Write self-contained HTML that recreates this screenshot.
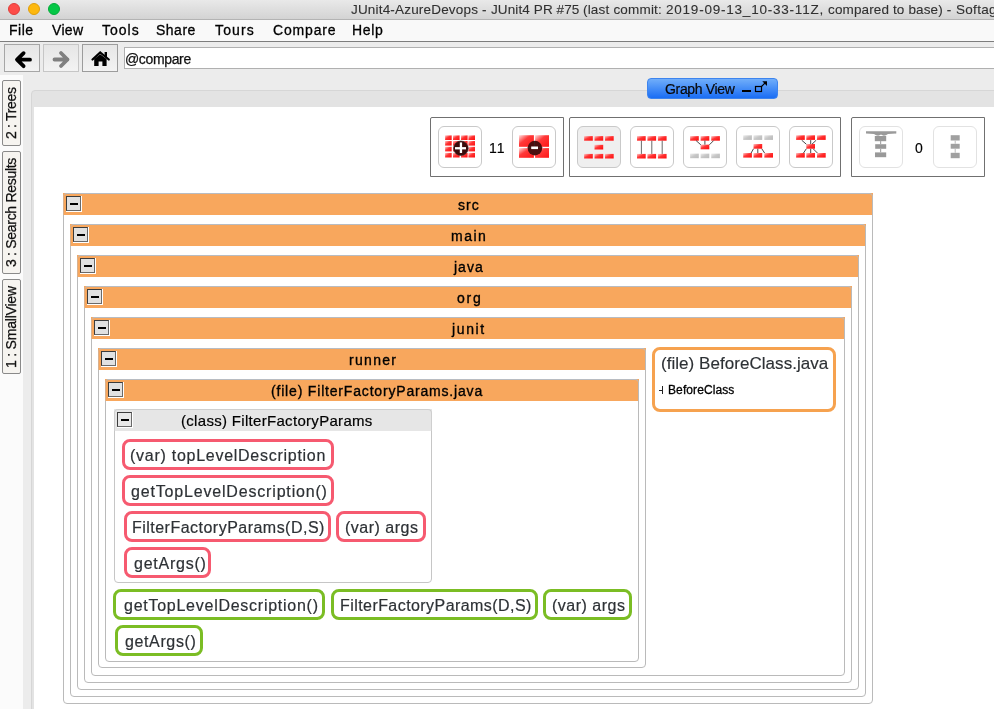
<!DOCTYPE html>
<html><head><meta charset="utf-8">
<style>
*{margin:0;padding:0;box-sizing:border-box}
html,body{width:994px;height:709px;overflow:hidden;background:#ececec;font-family:"Liberation Sans",sans-serif;position:relative}
.a{position:absolute}
.t{position:absolute;white-space:nowrap;line-height:1;will-change:transform}
#tb{left:0;top:0;width:994px;height:20px;background:linear-gradient(#e9e9e9,#d3d3d3);border-bottom:1px solid #b3b3b3}
.tl{position:absolute;top:3px;width:12px;height:12px;border-radius:50%}
#mb{left:0;top:20px;width:994px;height:22px;background:#f9f9f9;border-bottom:1px solid #7d7d7d}
.nb{position:absolute;top:44px;width:36px;height:28px;border:1px solid #a6a6a6;background:linear-gradient(#e6e6e6,#f3f3f3)}
#tf{left:124px;top:47px;width:880px;height:22px;background:#fff;border:1px solid #b0b0b0}
#sb{left:0;top:75px;width:23px;height:634px;background:#fbfbfb}
.vt{position:absolute;left:2px;width:19px;background:#f6f4f0;border:1px solid #8a8a8a;border-radius:2px}
.vtt{position:absolute;will-change:transform;line-height:1;white-space:nowrap;transform-origin:0 0;transform:rotate(-90deg)}
#pn{left:31px;top:90px;width:980px;height:640px;border:1px solid #d6d6d6;border-radius:4px 0 0 0;background:#e3e3e3}
#pw{left:34px;top:107px;width:970px;height:610px;background:#fff}
#gv{left:647px;top:78px;width:131px;height:21px;border-radius:4px;background:linear-gradient(#70aefa,#1a6df4);border:1px solid #3d84ee}
.grp{position:absolute;top:117px;height:60px;border:1px solid #707070;border-radius:2px 0 0 0;background:#fff}
.btn{position:absolute;top:126px;width:44px;height:42px;border:1px solid #c9c9c9;border-radius:6px;background:#fff}
.bx{position:absolute;border:1px solid #bababa;border-radius:4px;background:#fff}
.hd{position:absolute;left:-1px;top:-1px;right:-1px;height:22px;background:#f8a75d}
.hdb{position:absolute;left:-1px;top:-1px;right:-1px;height:22px;border:1px solid #b8bcc2;border-left-color:rgba(184,188,194,0.5);border-right-color:#bababa;border-bottom:0;border-radius:4px 4px 0 0}
.cb{position:absolute;width:16px;height:16px;background:#fff}
.cbi{position:absolute;left:0;top:0;width:15px;height:15px;background:#e1e1e1;border:1px solid #3c3c3c;border-right-color:#6a6a6a;border-bottom-color:#6a6a6a}
.cbm{position:absolute;left:3px;top:6px;width:8px;height:2px;background:#000}
.mem{position:absolute;border:3px solid #f65a70;border-radius:8px;background:#fff}
.grn{position:absolute;border:3px solid #7bbd24;border-radius:8px;background:#fff}
</style></head><body>
<div id="tb" class="a"></div>
<div class="tl" style="left:8px;background:#fd4c48;border:0.5px solid #e03e3a"></div>
<div class="tl" style="left:28px;background:#fdb80e;border:0.5px solid #e09e0a"></div>
<div class="tl" style="left:48px;background:#05c746;border:0.5px solid #04ab3a"></div>
<div id="ti0" class="t" style="left:351.00px;top:2.50px;font-size:13.5px;color:#303030;letter-spacing:0.181px;-webkit-text-stroke:0.1px #303030;">JUnit4-AzureDevops&#160;-&#160;</div>
<div id="ti1" class="t" style="left:490.60px;top:2.50px;font-size:13.5px;color:#303030;letter-spacing:0.108px;-webkit-text-stroke:0.1px #303030;">JUnit4&#160;PR&#160;#75&#160;</div>
<div id="ti2" class="t" style="left:582.90px;top:2.50px;font-size:13.5px;color:#303030;letter-spacing:0.189px;-webkit-text-stroke:0.1px #303030;">(last&#160;commit:&#160;</div>
<div id="ti3" class="t" style="left:665.80px;top:2.50px;font-size:13.5px;color:#303030;letter-spacing:0.780px;-webkit-text-stroke:0.1px #303030;">2019-09-13_10-33-11Z,&#160;</div>
<div id="ti4" class="t" style="left:828.30px;top:2.50px;font-size:13.5px;color:#303030;letter-spacing:0.133px;-webkit-text-stroke:0.1px #303030;">compared&#160;to&#160;base)&#160;-&#160;</div>
<div id="ti5" class="t" style="left:955.50px;top:2.50px;font-size:13.5px;color:#303030;letter-spacing:0.300px;-webkit-text-stroke:0.1px #303030;">Softagram</div>
<div id="mb" class="a"></div>
<div id="m1" class="t" style="left:8.50px;top:23.30px;font-size:14px;color:#000;letter-spacing:0.500px;-webkit-text-stroke:0.3px #000;">File</div>
<div id="m2" class="t" style="left:51.50px;top:23.30px;font-size:14px;color:#000;letter-spacing:0.334px;-webkit-text-stroke:0.3px #000;">View</div>
<div id="m3" class="t" style="left:102.00px;top:23.30px;font-size:14px;color:#000;letter-spacing:1.000px;-webkit-text-stroke:0.3px #000;">Tools</div>
<div id="m4" class="t" style="left:156.00px;top:23.30px;font-size:14px;color:#000;letter-spacing:0.500px;-webkit-text-stroke:0.3px #000;">Share</div>
<div id="m5" class="t" style="left:214.50px;top:23.30px;font-size:14px;color:#000;letter-spacing:1.125px;-webkit-text-stroke:0.3px #000;">Tours</div>
<div id="m6" class="t" style="left:272.50px;top:23.30px;font-size:14px;color:#000;letter-spacing:0.833px;-webkit-text-stroke:0.3px #000;">Compare</div>
<div id="m7" class="t" style="left:352.00px;top:23.30px;font-size:14px;color:#000;letter-spacing:0.665px;-webkit-text-stroke:0.3px #000;">Help</div>
<div class="nb" style="left:4px"></div>
<div class="nb" style="left:43px;border-color:#c6c6c6"></div>
<div class="nb" style="left:82px;border-color:#9c9c9c"></div>
<svg class="a" style="left:0;top:40px" width="130" height="35" viewBox="0 40 130 35">
 <path d="M30 59.7 H17.5 M23.6 53.2 L17 59.7 L23.6 66.2" fill="none" stroke="#000" stroke-width="3.8" stroke-linecap="round" stroke-linejoin="round"/>
 <path d="M54.5 59.5 H67.5 M61 53 L67.5 59.5 L61 66" fill="none" stroke="#808080" stroke-width="3.8" stroke-linecap="round" stroke-linejoin="round"/>
 <path d="M92.5 59.5 L100.2 52.5 L108.8 59.5" fill="none" stroke="#000" stroke-width="2.2" stroke-linecap="round"/>
 <rect x="104.6" y="52" width="2.4" height="5" fill="#000"/>
 <path d="M94.2 59 L100.2 54.2 L106.6 59 V66 H102.4 V61.5 H98.6 V66 H94.2 Z" fill="#000"/>
</svg>
<div id="tf" class="a"></div>
<div id="atc" class="t" style="left:125.00px;top:51.50px;font-size:14px;color:#111;letter-spacing:-0.357px;-webkit-text-stroke:0.25px #111;">@compare</div>
<div id="sb" class="a"></div>
<div class="vt" style="top:80px;height:66px"></div>
<div class="vt" style="top:151px;height:123px"></div>
<div class="vt" style="top:279px;height:95px"></div>
<div id="v1" class="vtt" style="left:4.30px;top:139.00px;font-size:14px;color:#111;letter-spacing:-0.310px;-webkit-text-stroke:0.25px #111;">2 : Trees</div><div id="v2" class="vtt" style="left:4.30px;top:266.50px;font-size:14px;color:#111;letter-spacing:-0.296px;-webkit-text-stroke:0.25px #111;">3 : Search Results</div><div id="v3" class="vtt" style="left:4.30px;top:368.00px;font-size:14px;color:#111;letter-spacing:-0.209px;-webkit-text-stroke:0.25px #111;">1 : SmallView</div>
<div id="pn" class="a"></div>
<div id="pw" class="a"></div>
<div id="gv" class="a"></div>
<div id="gvt" class="t" style="left:664.50px;top:81.50px;font-size:14px;color:#0a0a0a;letter-spacing:-0.333px;-webkit-text-stroke:0.2px #0a0a0a;">Graph View</div>
<svg class="a" style="left:740px;top:80px" width="30" height="16">
 <rect x="2" y="10" width="9" height="2" fill="#000"/>
 <rect x="15.5" y="6.5" width="6" height="5" fill="none" stroke="#000" stroke-width="1.2"/>
 <path d="M21.5 6.5 L25.5 2.5" fill="none" stroke="#000" stroke-width="1.1"/><path d="M22.3 1.2 H27 V5.9 Z" fill="#000"/>
</svg>
<div class="grp" style="left:430px;width:134px"></div>
<div class="grp" style="left:569px;width:272px"></div>
<div class="grp" style="left:851px;width:134px"></div>
<div class="btn" style="left:438px"></div>
<div class="btn" style="left:512px"></div>
<div class="btn" style="left:577px;background:#efefef"></div>
<div class="btn" style="left:630px;background:#fff"></div>
<div class="btn" style="left:683px;background:#fff"></div>
<div class="btn" style="left:736px;background:#fff"></div>
<div class="btn" style="left:789px;background:#fff"></div>
<div class="btn" style="left:859px;border-color:#e2e2e2"></div>
<div class="btn" style="left:933px;border-color:#e2e2e2"></div>
<div id="n11" class="t" style="left:489.00px;top:140.50px;font-size:14px;color:#000;letter-spacing:1.000px;-webkit-text-stroke:0.15px #000;">11</div><div id="n0" class="t" style="left:914.50px;top:140.50px;font-size:14px;color:#000;-webkit-text-stroke:0.15px #000;">0</div>
<svg class="a" style="left:0;top:0" width="994" height="200"><defs><linearGradient id="rg" x1="0" y1="0" x2="1" y2="1"><stop offset="0" stop-color="#ffc8c8"/><stop offset="0.45" stop-color="#ff3434"/><stop offset="1" stop-color="#ff0a0a"/></linearGradient><linearGradient id="rg2" x1="0" y1="0" x2="1" y2="1"><stop offset="0" stop-color="#ffe0e0"/><stop offset="0.4" stop-color="#ff3a3a"/><stop offset="1" stop-color="#ff1515"/></linearGradient><linearGradient id="gg" x1="0" y1="0" x2="1" y2="1"><stop offset="0" stop-color="#ececec"/><stop offset="0.5" stop-color="#c6c6c6"/><stop offset="1" stop-color="#bababa"/></linearGradient></defs><rect x="445.1" y="135.4" width="6.6" height="4.6" fill="url(#rg)"/><rect x="453.0" y="135.4" width="6.6" height="4.6" fill="url(#rg)"/><rect x="461.0" y="135.4" width="6.6" height="4.6" fill="url(#rg)"/><rect x="468.4" y="135.4" width="6.6" height="4.6" fill="url(#rg)"/><rect x="445.1" y="141.0" width="6.6" height="4.6" fill="url(#rg)"/><rect x="453.0" y="141.0" width="6.6" height="4.6" fill="url(#rg)"/><rect x="461.0" y="141.0" width="6.6" height="4.6" fill="url(#rg)"/><rect x="468.4" y="141.0" width="6.6" height="4.6" fill="url(#rg)"/><rect x="445.1" y="146.8" width="6.6" height="4.6" fill="url(#rg)"/><rect x="453.0" y="146.8" width="6.6" height="4.6" fill="url(#rg)"/><rect x="461.0" y="146.8" width="6.6" height="4.6" fill="url(#rg)"/><rect x="468.4" y="146.8" width="6.6" height="4.6" fill="url(#rg)"/><rect x="445.1" y="152.9" width="6.6" height="4.6" fill="url(#rg)"/><rect x="453.0" y="152.9" width="6.6" height="4.6" fill="url(#rg)"/><rect x="461.0" y="152.9" width="6.6" height="4.6" fill="url(#rg)"/><rect x="468.4" y="152.9" width="6.6" height="4.6" fill="url(#rg)"/><circle cx="460.9" cy="148.3" r="7.3" fill="#3a0a0a" stroke="#333" stroke-width="0.6"/><rect x="455" y="147.1" width="11" height="2.3" fill="#fff"/><rect x="459.8" y="142.4" width="2.3" height="10.6" fill="#fff"/><rect x="519" y="135.2" width="14.9" height="11.6" fill="url(#rg2)"/><rect x="535.1" y="135.2" width="13.9" height="11.6" fill="url(#rg2)"/><rect x="519" y="148.1" width="14.9" height="9.7" fill="url(#rg2)"/><rect x="535.1" y="148.1" width="13.9" height="9.7" fill="url(#rg2)"/><circle cx="534.9" cy="148.1" r="7.3" fill="#4a0e0e"/><rect x="527.5" y="147.1" width="15" height="0.9" fill="#333" fill-opacity="0.6"/><rect x="534.2" y="141" width="0.9" height="6" fill="#333" fill-opacity="0.6"/><rect x="531.2" y="146.5" width="6.8" height="2.6" fill="#fff"/><rect x="584.1" y="136.1" width="8.7" height="4.6" fill="url(#rg)"/><rect x="594.5" y="136.1" width="8.7" height="4.6" fill="url(#rg)"/><rect x="605.0" y="136.1" width="8.7" height="4.6" fill="url(#rg)"/><rect x="594.5" y="144.8" width="8.7" height="4.7" fill="url(#rg)"/><rect x="584.1" y="153.9" width="8.7" height="4.6" fill="url(#rg)"/><rect x="594.5" y="153.9" width="8.7" height="4.6" fill="url(#rg)"/><rect x="605.0" y="153.9" width="8.7" height="4.6" fill="url(#rg)"/><rect x="637.0" y="136.1" width="8.7" height="4.6" fill="url(#rg)"/><rect x="647.4" y="136.1" width="8.7" height="4.6" fill="url(#rg)"/><rect x="657.9" y="136.1" width="8.7" height="4.6" fill="url(#rg)"/><rect x="637.0" y="153.9" width="8.7" height="4.6" fill="url(#rg)"/><rect x="647.4" y="153.9" width="8.7" height="4.6" fill="url(#rg)"/><rect x="657.9" y="153.9" width="8.7" height="4.6" fill="url(#rg)"/><line x1="641.4" y1="140.7" x2="641.4" y2="153.9" stroke="#444" stroke-width="0.8"/><line x1="651.8" y1="140.7" x2="651.8" y2="153.9" stroke="#444" stroke-width="0.8"/><line x1="662.2" y1="140.7" x2="662.2" y2="153.9" stroke="#444" stroke-width="0.8"/><rect x="690.1" y="136.1" width="8.7" height="4.6" fill="url(#rg)"/><rect x="700.6" y="136.1" width="8.7" height="4.6" fill="url(#rg)"/><rect x="711.2" y="136.1" width="8.7" height="4.6" fill="url(#rg)"/><rect x="700.6" y="144.6" width="8.7" height="4.7" fill="url(#rg)"/><rect x="690.1" y="153.6" width="8.7" height="4.6" fill="url(#gg)"/><rect x="700.6" y="153.6" width="8.7" height="4.6" fill="url(#gg)"/><rect x="711.2" y="153.6" width="8.7" height="4.6" fill="url(#gg)"/><path d="M696.1 140.6 L700.8 144.8 M713.6 140.6 L709.4 144.8 M704.9 140.6 V144.6" stroke="#333" stroke-width="0.9" fill="none"/><rect x="743.2" y="135.3" width="8.7" height="4.6" fill="url(#gg)"/><rect x="753.5" y="135.3" width="8.7" height="4.6" fill="url(#gg)"/><rect x="764.3" y="135.3" width="8.7" height="4.6" fill="url(#gg)"/><rect x="753.5" y="144.0" width="8.7" height="4.7" fill="url(#rg)"/><rect x="743.2" y="153.0" width="8.7" height="4.6" fill="url(#rg)"/><rect x="753.5" y="153.0" width="8.7" height="4.6" fill="url(#rg)"/><rect x="764.3" y="153.0" width="8.7" height="4.6" fill="url(#rg)"/><path d="M753.5 148.8 L751.1 153 M761.8 148.8 L764.6 153 M757.8 148.8 V153" stroke="#333" stroke-width="0.9" fill="none"/><rect x="796.1" y="135.3" width="8.7" height="4.6" fill="url(#rg)"/><rect x="806.3" y="135.3" width="8.7" height="4.6" fill="url(#rg)"/><rect x="817.0" y="135.3" width="8.7" height="4.6" fill="url(#rg)"/><rect x="806.3" y="144.0" width="8.7" height="4.7" fill="url(#rg)"/><rect x="796.1" y="153.0" width="8.7" height="4.6" fill="url(#rg)"/><rect x="806.3" y="153.0" width="8.7" height="4.6" fill="url(#rg)"/><rect x="817.0" y="153.0" width="8.7" height="4.6" fill="url(#rg)"/><path d="M801.7 140.2 L806.3 144.2 M816.2 140.2 L812.0 144.2 M806.3 148.8 L803.5 153 M813.2 148.8 L817.4 153 M810.7 140.1 V144 M810.7 148.8 V153" stroke="#333" stroke-width="0.9" fill="none"/><path d="M866 131.2 H896.3 V133.5 L888 134 Q884 137 881 134.5 Q878 137 874 134 L866 133.5 Z" fill="#9a9a9a"/><rect x="874.8" y="136" width="11.4" height="5.2" fill="#999"/><rect x="875.2" y="144.2" width="11" height="4.6" fill="#999"/><rect x="875" y="152.4" width="11.2" height="4.8" fill="#999"/><rect x="880" y="141" width="1.2" height="3.4" fill="#aaa"/><rect x="880" y="148.6" width="1.2" height="3.8" fill="#aaa"/><rect x="950.7" y="135.2" width="9" height="5.3" fill="#a0a0a0"/><rect x="950.7" y="143.8" width="9" height="4.9" fill="#a0a0a0"/><rect x="950.7" y="152.8" width="9" height="5.4" fill="#a0a0a0"/><rect x="954.7" y="140.5" width="1" height="3.3" fill="#bbb"/><rect x="954.7" y="148.7" width="1" height="4.1" fill="#bbb"/></svg>
<div class="bx" style="left:63px;top:193px;width:810px;height:511px"><div class="hd"></div><div class="hdb"></div></div>
<div class="cb" style="left:66px;top:196px"><div class="cbi"><div class="cbm"></div></div></div>
<div id="h1" class="t" style="left:458.00px;top:198.00px;font-size:14px;color:#000;letter-spacing:1.000px;-webkit-text-stroke:0.35px #000;">src</div>
<div class="bx" style="left:70px;top:224px;width:796px;height:473px"><div class="hd"></div><div class="hdb"></div></div>
<div class="cb" style="left:73px;top:227px"><div class="cbi"><div class="cbm"></div></div></div>
<div id="h2" class="t" style="left:451.00px;top:229.00px;font-size:14px;color:#000;letter-spacing:1.500px;-webkit-text-stroke:0.35px #000;">main</div>
<div class="bx" style="left:77px;top:255px;width:782px;height:435px"><div class="hd"></div><div class="hdb"></div></div>
<div class="cb" style="left:80px;top:258px"><div class="cbi"><div class="cbm"></div></div></div>
<div id="h3" class="t" style="left:454.00px;top:260.00px;font-size:14px;color:#000;letter-spacing:1.001px;-webkit-text-stroke:0.35px #000;">java</div>
<div class="bx" style="left:84px;top:286px;width:768px;height:397px"><div class="hd"></div><div class="hdb"></div></div>
<div class="cb" style="left:87px;top:289px"><div class="cbi"><div class="cbm"></div></div></div>
<div id="h4" class="t" style="left:456.50px;top:291.00px;font-size:14px;color:#000;letter-spacing:1.750px;-webkit-text-stroke:0.35px #000;">org</div>
<div class="bx" style="left:91px;top:317px;width:754px;height:359px"><div class="hd"></div><div class="hdb"></div></div>
<div class="cb" style="left:94px;top:320px"><div class="cbi"><div class="cbm"></div></div></div>
<div id="h5" class="t" style="left:451.50px;top:322.00px;font-size:14px;color:#000;letter-spacing:1.625px;-webkit-text-stroke:0.35px #000;">junit</div>
<div class="bx" style="left:98px;top:348px;width:548px;height:320px"><div class="hd"></div><div class="hdb"></div></div>
<div class="cb" style="left:101px;top:351px"><div class="cbi"><div class="cbm"></div></div></div>
<div id="h6" class="t" style="left:349.00px;top:353.00px;font-size:14px;color:#000;letter-spacing:1.300px;-webkit-text-stroke:0.35px #000;">runner</div>
<div class="bx" style="left:105px;top:379px;width:534px;height:283px"><div class="hd"></div><div class="hdb"></div></div>
<div class="cb" style="left:108px;top:382px"><div class="cbi"><div class="cbm"></div></div></div>
<div id="h7" class="t" style="left:271.00px;top:384.00px;font-size:14px;color:#000;letter-spacing:0.817px;-webkit-text-stroke:0.35px #000;">(file) FilterFactoryParams.java</div>
<div class="bx" style="left:114px;top:409px;width:318px;height:174px;border-color:#c6c6c6"><div class="hd" style="background:#e6e6e6;height:22px"></div><div class="hdb" style="border-color:#cfcfcf"></div></div>
<div class="cb" style="left:117px;top:412px"><div class="cbi" style="width:15px;height:15px;background:#e8e8e8"><div class="cbm"></div></div></div>
<div id="cls" class="t" style="left:181.00px;top:413.00px;font-size:15px;color:#000;letter-spacing:0.308px;-webkit-text-stroke:0.2px #000;">(class) FilterFactoryParams</div>
<div class="mem" style="left:122px;top:439px;width:212px;height:31px"></div>
<div id="p1" class="t" style="left:130.00px;top:447.70px;font-size:16px;color:#2d3135;letter-spacing:0.730px;-webkit-text-stroke:0.2px #2d3135;">(var) topLevelDescription</div>
<div class="mem" style="left:122px;top:475px;width:212px;height:31px"></div>
<div id="p2" class="t" style="left:131.00px;top:483.70px;font-size:16px;color:#2d3135;letter-spacing:0.825px;-webkit-text-stroke:0.2px #2d3135;">getTopLevelDescription()</div>
<div class="mem" style="left:124px;top:511px;width:207px;height:31px"></div>
<div id="p3" class="t" style="left:132.00px;top:519.70px;font-size:16px;color:#2d3135;letter-spacing:0.479px;-webkit-text-stroke:0.2px #2d3135;">FilterFactoryParams(D,S)</div>
<div class="mem" style="left:336px;top:511px;width:90px;height:31px"></div>
<div id="p4" class="t" style="left:344.50px;top:519.70px;font-size:16px;color:#2d3135;letter-spacing:0.500px;-webkit-text-stroke:0.2px #2d3135;">(var) args</div>
<div class="mem" style="left:124px;top:547px;width:87px;height:31px"></div>
<div id="p5" class="t" style="left:133.50px;top:555.70px;font-size:16px;color:#2d3135;letter-spacing:0.750px;-webkit-text-stroke:0.2px #2d3135;">getArgs()</div>
<div class="grn" style="left:113px;top:589px;width:212px;height:31px"></div>
<div id="g1" class="t" style="left:123.50px;top:597.70px;font-size:16px;color:#2d3135;letter-spacing:0.740px;-webkit-text-stroke:0.2px #2d3135;">getTopLevelDescription()</div>
<div class="grn" style="left:331px;top:589px;width:207px;height:31px"></div>
<div id="g2" class="t" style="left:339.50px;top:597.70px;font-size:16px;color:#2d3135;letter-spacing:0.434px;-webkit-text-stroke:0.2px #2d3135;">FilterFactoryParams(D,S)</div>
<div class="grn" style="left:543px;top:589px;width:89px;height:31px"></div>
<div id="g3" class="t" style="left:552.00px;top:597.70px;font-size:16px;color:#2d3135;letter-spacing:0.500px;-webkit-text-stroke:0.2px #2d3135;">(var) args</div>
<div class="grn" style="left:115px;top:625px;width:88px;height:31px"></div>
<div id="g4" class="t" style="left:125.00px;top:633.70px;font-size:16px;color:#2d3135;letter-spacing:0.625px;-webkit-text-stroke:0.2px #2d3135;">getArgs()</div>
<div class="a" style="left:652px;top:347px;width:184px;height:65px;border:3px solid #f6a24f;border-radius:8px;background:#fff"></div>
<div id="bc1" class="t" style="left:660.50px;top:355.00px;font-size:17px;color:#2d3135;letter-spacing:0.045px;-webkit-text-stroke:0.15px #2d3135;">(file) BeforeClass.java</div>
<div class="a" style="left:659px;top:389.5px;width:3px;height:1px;background:#222"></div><div class="a" style="left:662px;top:386px;width:1px;height:8px;background:#222"></div>
<div id="bc2" class="t" style="left:667.50px;top:384.00px;font-size:12px;color:#000;letter-spacing:0.100px;-webkit-text-stroke:0.3px #000;">BeforeClass</div>
</body></html>
